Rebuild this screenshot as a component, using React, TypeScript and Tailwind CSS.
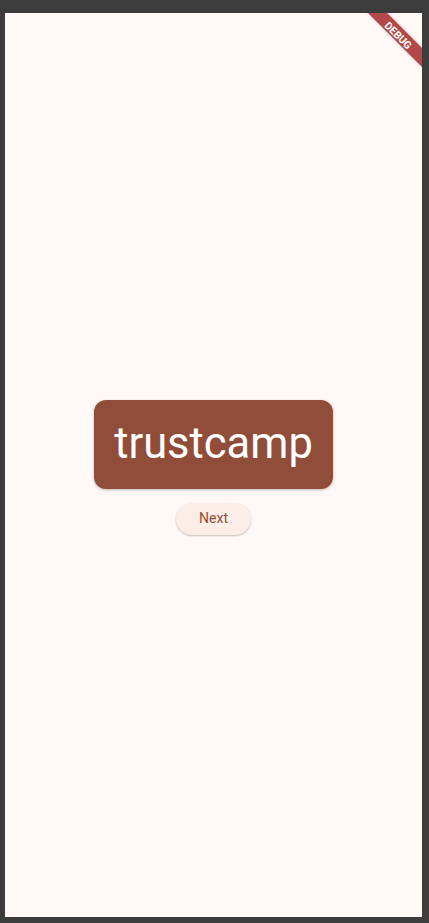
export default function App() {
  return (
    <div className="w-[429px] h-[923px] bg-[#3c3c3c] pt-[13px] pl-[5px] pr-[7px] pb-[6px] font-['Roboto',sans-serif]">
      <div className="relative h-[904px] bg-[#fff8f6] flex flex-col items-center justify-center gap-[14px] overflow-hidden">
        <div className="mt-[4px] w-[239px] rounded-[12px] bg-[#904d3a] h-[89px] flex items-center justify-center shadow-[0_1px_3px_rgba(0,0,0,0.25)]">
          <span className="text-[43.5px] leading-[52px] text-white">trustcamp</span>
        </div>
        <button className="h-[32px] w-[75px] rounded-full bg-[#fcede9] text-[14px] font-normal text-[#904d3a] shadow-[0_1px_2px_rgba(0,0,0,0.25)]">
          Next
        </button>

        {/* debug banner */}
        <svg className="absolute top-0 right-0" width="60" height="60" viewBox="0 0 60 60">
          <defs>
            <filter id="bs" x="-20%" y="-20%" width="140%" height="140%">
              <feGaussianBlur stdDeviation="1.5" />
            </filter>
          </defs>
          <polygon points="6,0 25,0 60,35 60,54" fill="rgba(0,0,0,0.25)" filter="url(#bs)" />
          <polygon points="6,0 25,0 60,35 60,54" fill="#b34848" />
          <text
            x="0"
            y="0"
            transform="translate(36 22.5) rotate(45)"
            textAnchor="middle"
            dominantBaseline="central"
            fill="#fff"
            fontSize="10.5"
            fontWeight="700"
            fontFamily="Roboto, sans-serif"
          >
            DEBUG
          </text>
        </svg>
      </div>
    </div>
  );
}
